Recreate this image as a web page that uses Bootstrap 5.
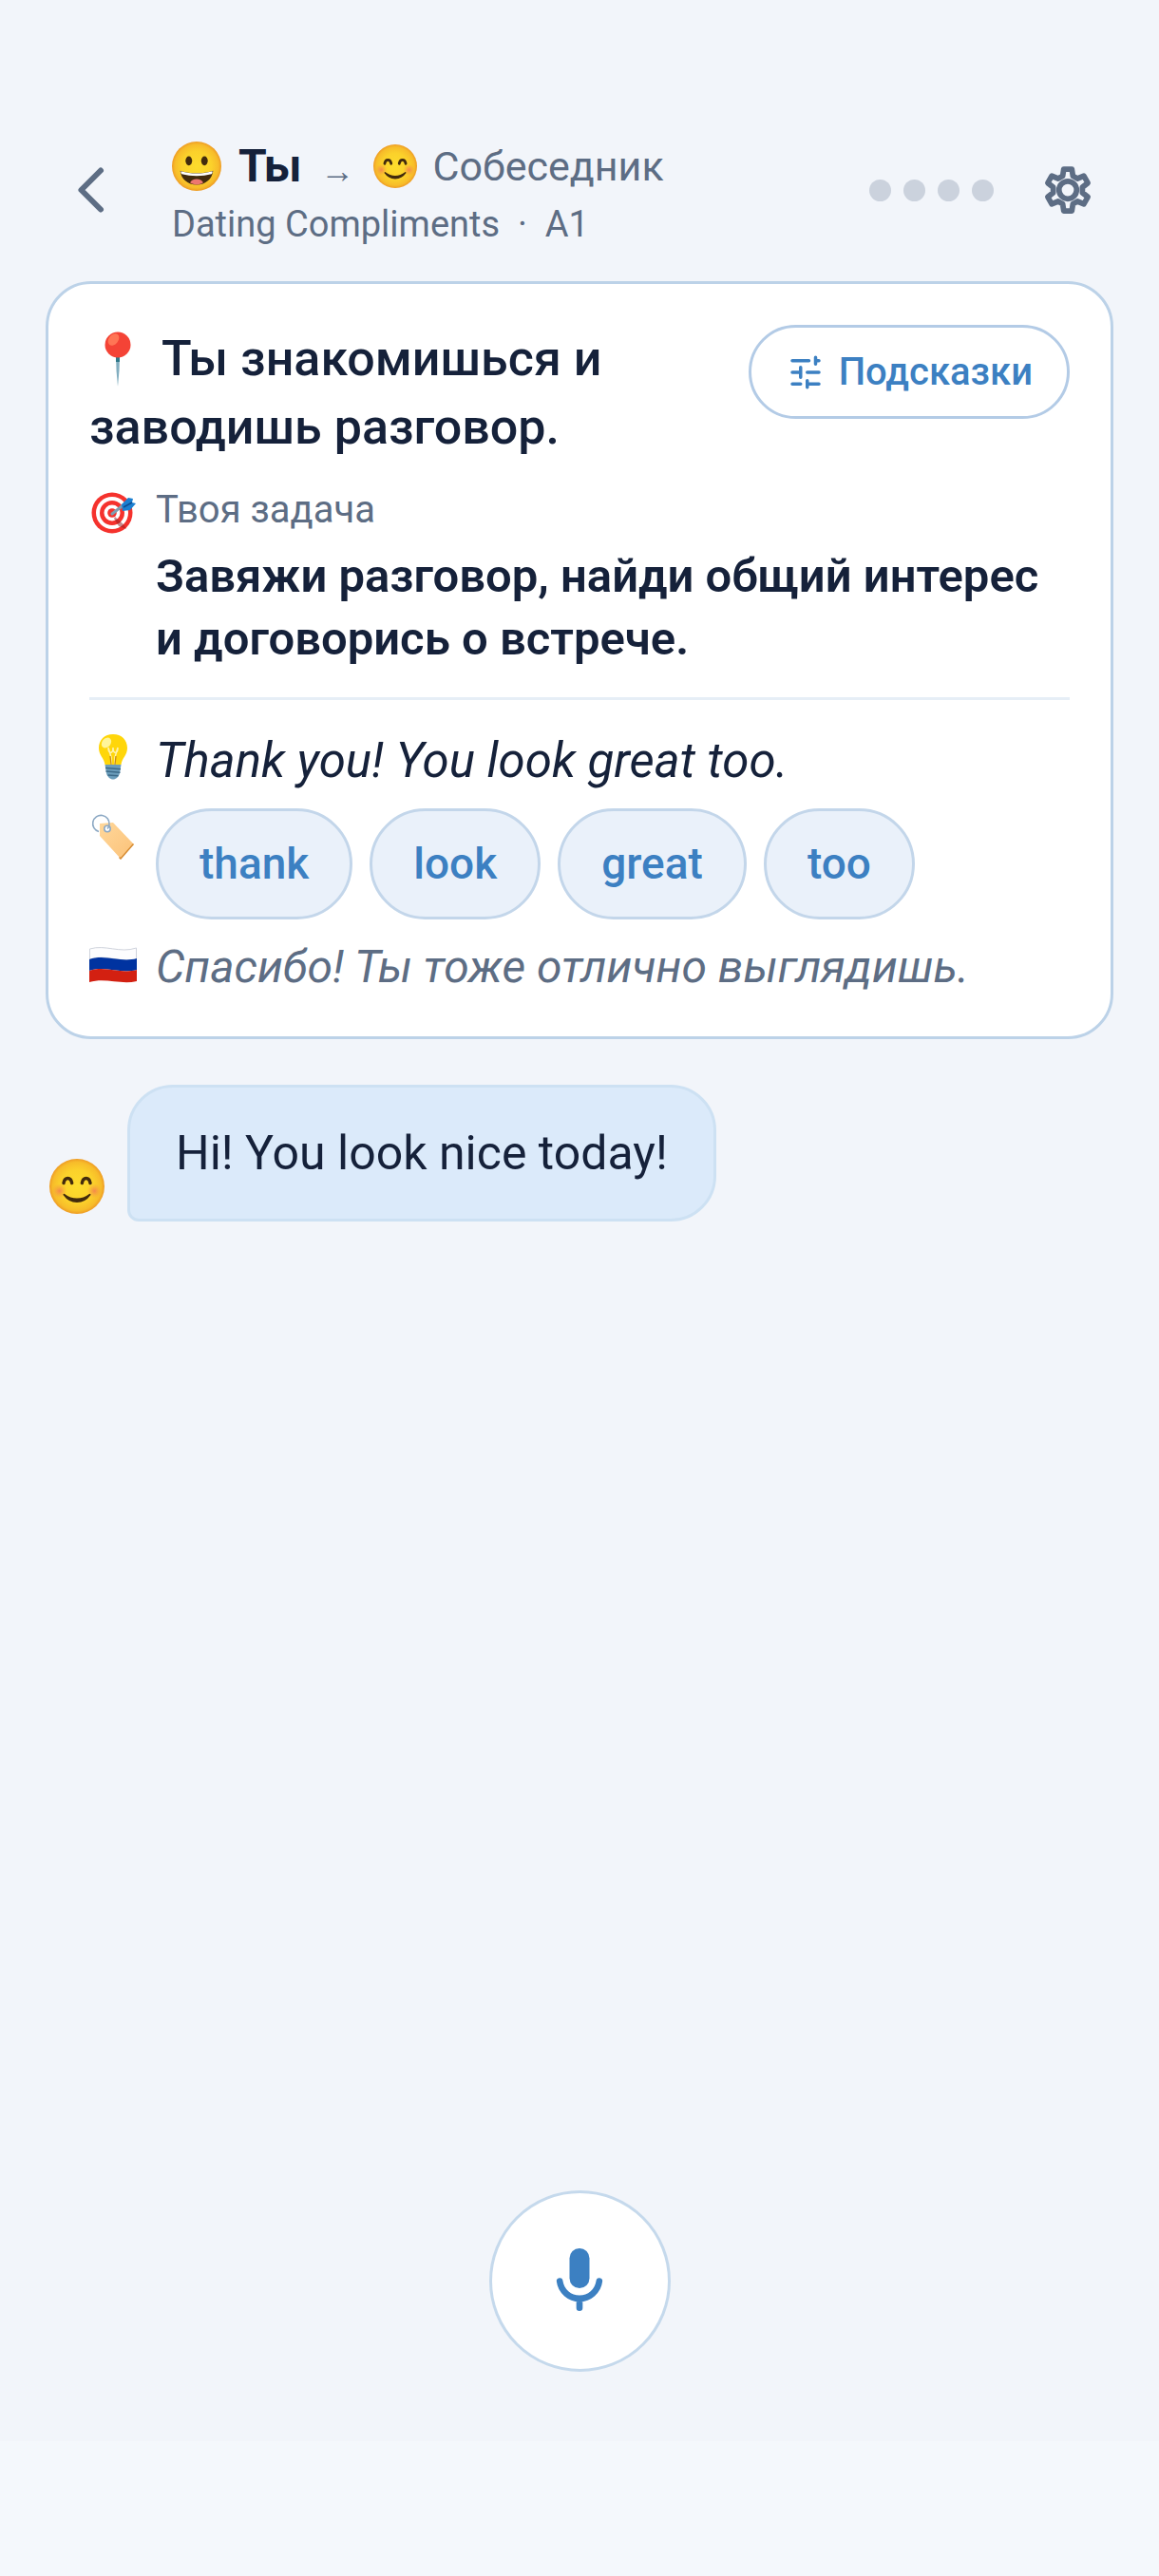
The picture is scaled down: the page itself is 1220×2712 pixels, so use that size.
<!DOCTYPE html>
<html lang="ru">
<head>
<meta charset="utf-8">
<meta name="viewport" content="width=device-width, initial-scale=1">
<title>Dating Compliments</title>
<link href="https://cdn.jsdelivr.net/npm/bootstrap@5.3.0/dist/css/bootstrap.min.css" rel="stylesheet">
<style>
  :root { --ink: #15213a; --muted: #5d6d84; --accent: #3c80c2; --edge: #bcd2e8; }
  body { background: #f2f5fa; color: var(--ink); font-family: Roboto, "Noto Sans", sans-serif; font-size: 48px; line-height: 66px; }
  svg { display: block; flex: none; }
  .top-bar { padding: 104px 48px 0; min-height: 296px; }
  .tap { width: 96px; height: 96px; color: var(--muted); }
  .top-text { margin-left: 37px; }
  .who { line-height: 72px; }
  .peer { font-size: 43px; color: var(--muted); }
  .arrow { font-family: "Liberation Sans", sans-serif; font-size: 36px; line-height: 40px; margin: 10px 20px 0; color: var(--muted); }
  .topic { font-size: 38px; line-height: 50px; color: var(--muted); }
  .emo-you { margin-right: 18px; }
  .emo-peer { margin-right: 16px; }
  .step { width: 23px; height: 23px; border-radius: 50%; background: #cbd2dd; }
  .steps { gap: 13px; margin-right: 30px; }
  .page-pad { padding-left: 48px; padding-right: 48px; }
  .task-card { border: 3px solid var(--edge); border-radius: 48px; padding: 43px; }
  .scene { font-size: 52px; line-height: 72px; font-weight: 500; }
  .scene svg { display: inline-block; vertical-align: -13px; margin: 0 28px 0 12px; }
  .hint-btn { border: 3px solid #b3cbe6; border-radius: 50px; padding: 0 36px; height: 99px; font-size: 40px; font-weight: 500; color: var(--accent); gap: 14px; }
  .line-row { gap: 20px; }
  .ico-cell { width: 50px; flex: none; display: flex; justify-content: center; }
  .task-label { font-size: 40px; line-height: 54px; color: var(--muted); }
  .goal { font-size: 49px; font-weight: 600; margin-top: 10px; }
  .rule { height: 3px; background: #e6eef6; margin: 28px 0; }
  .phrase { font-size: 51px; line-height: 72px; font-style: italic; }
  .chip-row { margin: 14px 0 20px; }
  .chips { gap: 18px; }
  .chip { border: 3px solid #c3d6ea; border-radius: 59px; background: #eaf1fa; color: var(--accent); font-size: 46px; font-weight: 500; height: 117px; padding: 0 43px; }
  .translation { font-size: 48px; line-height: 60px; font-style: italic; color: var(--muted); }
  .msg { margin-top: 48px; gap: 24px; }
  .bubble { background: #dbeafa; border: 3px solid #cde1f3; border-radius: 48px 48px 48px 12px; padding: 36px 48px; font-size: 50px; }
  .mic { width: 191px; height: 191px; border: 3px solid #c5d9ec; color: var(--accent); margin-bottom: 73px; }
  .nav-strip { height: 142px; background: #f4f8fc; }
</style>
</head>
<body class="d-flex flex-column min-vh-100">
<svg width="0" height="0" class="position-absolute" aria-hidden="true">
  <defs>
    <radialGradient id="skin" cx=".5" cy=".5" r=".5"><stop offset="0" stop-color="#fddc2c"/><stop offset=".6" stop-color="#fbd12b"/><stop offset=".88" stop-color="#f7bc2a"/><stop offset="1" stop-color="#ee9b24"/></radialGradient>
    <radialGradient id="blush"><stop offset="0" stop-color="#f47c52" stop-opacity=".85"/><stop offset="1" stop-color="#f59a3e" stop-opacity="0"/></radialGradient>
    <linearGradient id="tagfill" x1="0" y1="0" x2="1" y2="1"><stop offset="0" stop-color="#ffd79a"/><stop offset="1" stop-color="#fbc279"/></linearGradient>
    <symbol id="smile" viewBox="0 0 60 60">
      <circle cx="30" cy="30" r="30" fill="url(#skin)"/>
      <circle cx="11" cy="35" r="8" fill="url(#blush)"/><circle cx="49" cy="35" r="8" fill="url(#blush)"/>
      <path d="M15.500 26.500c1-7 8-7 9 0M35.500 26.500c1-7 8-7 9 0" fill="none" stroke="#422b0d" stroke-width="3.600" stroke-linecap="round"/>
      <path d="M16 39c7 10 21 10 28 0-5 4-9 5-14 5s-9-1-14-5z" fill="#422b0d" stroke="#422b0d" stroke-width="2" stroke-linejoin="round"/>
    </symbol>
  </defs>
</svg>

<header class="top-bar d-flex align-items-center">
  <button type="button" class="btn p-0 border-0 tap d-flex align-items-center justify-content-center" aria-label="Назад">
    <svg width="40" height="56" viewBox="0 0 40 56" fill="none" stroke="currentColor" stroke-width="6" stroke-linecap="round" stroke-linejoin="round"><path d="M30 7.500 9.500 28 30 48.500"/></svg>
  </button>
  <div class="top-text flex-grow-1">
    <div class="who d-flex align-items-center text-nowrap">
      <svg class="emo-you" width="52" height="52" viewBox="0 0 60 60" aria-hidden="true">
        <circle cx="30" cy="30" r="30" fill="url(#skin)"/>
        <ellipse cx="20.500" cy="23.500" rx="4" ry="5.500" fill="#422b0d"/><ellipse cx="39.500" cy="23.500" rx="4" ry="5.500" fill="#422b0d"/>
        <path d="M10 35.500c13 4 27 4 40 0-1 10-9 17-20 17s-19-7-20-17z" fill="#422b0d"/>
        <path d="M11 36c12 3.500 26 3.500 38 0 .5 1.500 0 3-1 3.500-11 3-25 3-36 0-1-.5-1.500-2-1-3.500z" fill="#fff"/>
        <path d="M22 50c2-6 14-6 16 0-5 3.200-11 3.200-16 0z" fill="#ed7770"/>
      </svg>
      <strong class="fw-bold">Ты</strong>
      <span class="arrow">→</span>
      <svg class="emo-peer" width="46" height="46" aria-hidden="true"><use href="#smile"/></svg>
      <span class="peer">Собеседник</span>
    </div>
    <div class="topic">Dating Compliments &nbsp;·&nbsp; A1</div>
  </div>
  <div class="steps d-flex" aria-hidden="true"><span class="step"></span><span class="step"></span><span class="step"></span><span class="step"></span></div>
  <button type="button" class="btn p-0 border-0 tap d-flex align-items-center justify-content-center" aria-label="Настройки">
    <svg width="60" height="60" viewBox="0 0 24 24" fill="none" stroke="currentColor" stroke-width="2.300" stroke-linejoin="round"><path d="M10.300 3.200h3.400l.45 2.900 1.900 1.100 2.700-1.100 1.700 2.950-2.300 1.800v2.300l2.300 1.800-1.700 2.950-2.700-1.100-1.900 1.100-.45 2.900h-3.400l-.45-2.900-1.900-1.100-2.700 1.100-1.700-2.950 2.300-1.800v-2.300l-2.300-1.800 1.700-2.950 2.700 1.100 1.900-1.100z"/><circle cx="12" cy="12" r="3.700"/></svg>
  </button>
</header>

<main class="page-pad flex-grow-1">
  <section class="task-card bg-white">
    <div class="d-flex justify-content-between align-items-start gap-4">
      <div class="scene"><svg width="36" height="60" viewBox="0 0 36 60" aria-hidden="true"><path d="M16 26h4l-.5 16L18 59l-1.500-17z" fill="#82aec0"/><path d="M16 26h4v7h-4z" fill="#2f7889"/><circle cx="18" cy="15" r="13.500" fill="#f44336"/><ellipse cx="13.500" cy="9.500" rx="5" ry="7" transform="rotate(38 13.500 9.500)" fill="#ff7555"/></svg>Ты знакомишься и<br>заводишь разговор.</div>
      <button type="button" class="btn hint-btn bg-white d-flex align-items-center text-nowrap">
        <svg width="42" height="42" viewBox="0 0 24 24" fill="none" stroke="currentColor" stroke-width="2" stroke-linecap="round"><path d="M4 5h10M18 3v4M18.500 5H20M4 12h4M9 9v6M13 12h7M4 19h5M13 17v4M14 19h6"/></svg>
        <span>Подсказки</span>
      </button>
    </div>

    <div class="d-flex line-row mt-4">
      <div class="ico-cell pt-1">
        <svg width="50" height="50" viewBox="0 0 50 50" aria-hidden="true"><circle cx="24" cy="26" r="21.500" fill="#f5322d"/><circle cx="24" cy="26" r="17" fill="#fff"/><circle cx="24" cy="26" r="13" fill="#f5322d"/><circle cx="24" cy="26" r="8.500" fill="#fff"/><circle cx="24" cy="26" r="4.800" fill="#f5322d"/><path d="m27 30 9 8 3 5-8-3-5-8z" fill="#8e1c20" opacity=".5"/><path d="m24 27 14-11" stroke="#7d9fb2" stroke-width="3" stroke-linecap="round"/><path d="m34 17 7-7 5 1-1 4 4 1-6 7-8 1z" fill="#1b7fd0"/><path d="m36 20 9-5" stroke="#0d4c91" stroke-width="1.500"/></svg>
      </div>
      <div>
        <div class="task-label">Твоя задача</div>
        <div class="goal">Завяжи разговор, найди общий интерес<br>и договорись о встрече.</div>
      </div>
    </div>

    <div class="rule"></div>

    <div class="d-flex line-row">
      <div class="ico-cell pt-2">
        <svg width="32" height="48" viewBox="0 0 32 48" aria-hidden="true"><path d="M16 0C7 0 1 6 1 14.500 1 22 6.500 25 7.500 32h17C25.500 25 31 22 31 14.500 31 6 25 0 16 0z" fill="#ffd60a"/><ellipse cx="9" cy="9" rx="4.500" ry="6" transform="rotate(40 9 9)" fill="#fff59a"/><path d="m11 14 3 10v8M21 14l-3 10v8M11 14c0 7 5 7 5 0 0 7 5 7 5 0" fill="none" stroke="#fff3b0" stroke-width="1.500"/><path d="m13 23 1 9M19 23l-1 9" stroke="#c98a12" stroke-width="1.300"/><path d="M7.500 32h17l-1.500 9c-1 4-4 6.500-7 6.500S10 45 9 41z" fill="#6b9dbb"/><path d="m8 35.500 16 1.200M8.500 39l15 1.200M10.500 43l11 .8" stroke="#3c6a88" stroke-width="1.500"/></svg>
      </div>
      <div class="phrase">Thank you! You look great too.</div>
    </div>

    <div class="d-flex line-row chip-row">
      <div class="ico-cell pt-1">
        <svg width="46" height="50" viewBox="0 0 46 50" aria-hidden="true"><path d="m9 12 14-1L44.500 33.500 31 49 9 25z" fill="url(#tagfill)"/><path d="M44.500 33.500 31 49l-1.500-1.500" fill="none" stroke="#d68b32" stroke-width="1.500"/><circle cx="17" cy="17.500" r="3.200" fill="#fff" stroke="#8da9c4" stroke-width="1.600"/><path d="M8 20.500A8.700 8.700 0 1 1 19 13c0 2-1 3.500-2 4.500" fill="none" stroke="#8da9c4" stroke-width="1.600"/></svg>
      </div>
      <div class="chips d-flex flex-wrap">
        <button type="button" class="btn chip">thank</button>
        <button type="button" class="btn chip">look</button>
        <button type="button" class="btn chip">great</button>
        <button type="button" class="btn chip">too</button>
      </div>
    </div>

    <div class="d-flex line-row">
      <div class="ico-cell pt-2">
        <svg width="50" height="40" viewBox="0 0 50 40" aria-hidden="true"><path d="M.5 3C17-2 32 8 49.500 2v12C33 18 17 8 .5 14z" fill="#fdfdfe" stroke="#cfd3dc" stroke-width="1"/><path d="M0 14C17 8 33 18 50 13v12C33 30 17 20 0 26z" fill="#0033a0"/><path d="M0 26c17-6 33 4 50-1v12c-17 4-33-4-50 1z" fill="#d32011"/></svg>
      </div>
      <div class="translation">Спасибо! Ты тоже отлично выглядишь.</div>
    </div>
  </section>

  <section class="msg d-flex align-items-end">
    <svg class="ms-1 mb-2" width="58" height="58" aria-label="Собеседник"><use href="#smile"/></svg>
    <div class="bubble">Hi! You look nice today!</div>
  </section>
</main>

<footer>
  <button type="button" class="btn mic bg-white rounded-circle p-0 d-flex align-items-center justify-content-center mx-auto" aria-label="Говорить">
    <svg width="84" height="84" viewBox="0 0 24 24"><rect x="9" y="2" width="6" height="12" rx="3" fill="currentColor"/><path d="M6.050 11.900a6 6 0 0 0 11.900 0M12 17.500v2.400" fill="none" stroke="currentColor" stroke-width="1.900" stroke-linecap="round"/></svg>
  </button>
  <div class="nav-strip"></div>
</footer>
<script src="https://cdn.jsdelivr.net/npm/bootstrap@5.3.0/dist/js/bootstrap.bundle.min.js"></script>
</body>
</html>
